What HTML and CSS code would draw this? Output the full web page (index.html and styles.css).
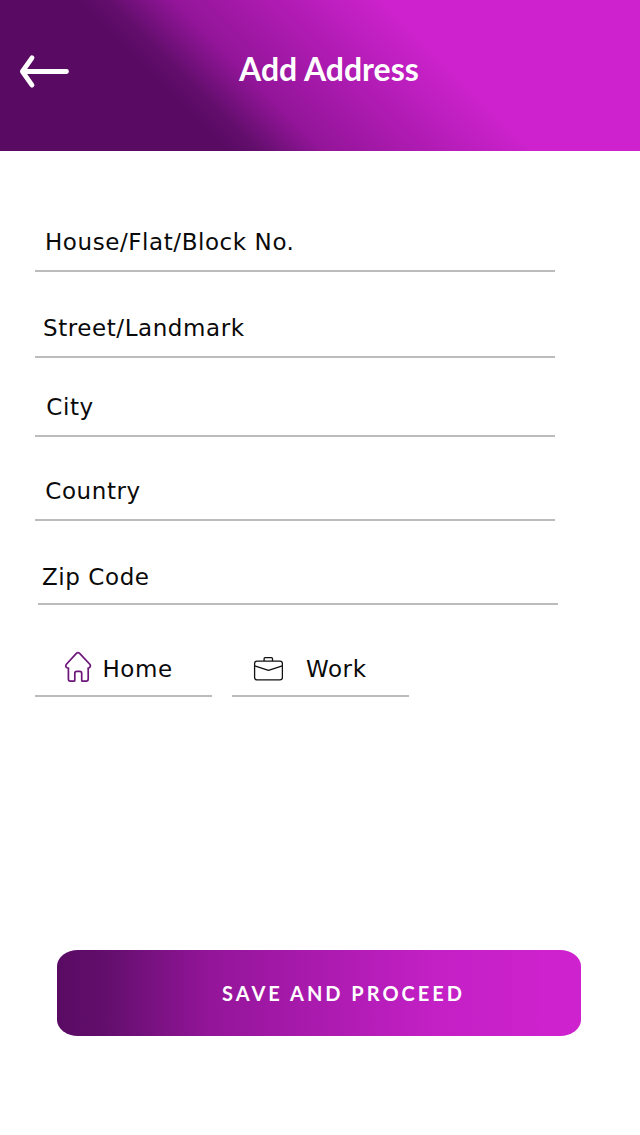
FILE: index.html
```html
<!DOCTYPE html>
<html lang="en">
<head>
<meta charset="utf-8">
<title>Add Address</title>
<link rel="stylesheet" href="styles.css">
</head>
<body>
<header class="header">
  <svg class="back" width="52" height="36" viewBox="0 0 52 36"><path d="M14 3.8 4.4 17.5 14 31.1M4.4 17.5H48.5"/></svg>
  <h1 class="title">Add Address</h1>
</header>
<main class="form">
  <div class="field house">House/Flat/Block No.</div>
  <div class="field street">Street/Landmark</div>
  <div class="field city">City</div>
  <div class="field country">Country</div>
  <div class="field zip">Zip Code</div>
  <div class="types">
    <div class="type home">
      <svg class="icon" width="28" height="32" viewBox="0 0 28 32"><path d="M12.6 2.2Q14 .9 15.4 2.2L25.8 13.2Q27.3 15.4 25.2 16.8L24.2 17.2V28Q24.2 30.2 22.2 30.2H18.6Q17.7 30.2 17.7 29.2V22.4Q17.7 20.4 15.8 20.4H12.8Q10.8 20.4 10.8 22.4V29.2Q10.8 30.2 9.8 30.2H6.4Q4.4 30.2 4.4 28V17.2L3 16.8Q.8 15.4 2.4 13.2Z"/></svg>
      <span>Home</span>
    </div>
    <div class="type work">
      <svg class="icon" width="30" height="26" viewBox="0 0 30 26"><rect x="1.6" y="5.1" width="27.8" height="18.8" rx="2.4"/><path d="M11.1 5V2.7Q11.1 1.7 12.1 1.7H18.5Q19.5 1.7 19.5 2.7V5M1.7 9.9 15.5 14.3 29.3 9.9"/></svg>
      <span>Work</span>
    </div>
  </div>
  <button class="save">SAVE AND PROCEED</button>
</main>
</body>
</html>
```

FILE: styles.css
```css
* { box-sizing: border-box; }
body {
  margin: 0;
  background: #fff;
  font-family: "DejaVu Sans", sans-serif;
  color: #0a0a0a;
}
.header {
  display: grid;
  grid-template-columns: 52px 1fr;
  height: 151px;
  padding: 49px 0 0 18px;
  background: linear-gradient(45deg, #590b63 29%, #620e6c 32.5%, #931599 41%, #cd22cd 67.5%);
}
.back {
  margin-top: 5px;
  fill: none;
  stroke: #fff;
  stroke-width: 4.8;
  stroke-linecap: round;
  stroke-linejoin: round;
}
.title {
  margin: 0;
  padding-left: 169px;
  font: 700 32px/40px Lato, sans-serif;
  color: #fff;
}
.form {
  display: flex;
  flex-direction: column;
  padding: 69px 35px 0;
}
.field {
  width: 520px;
  border-bottom: 2px solid #bcbcbc;
  font-size: 23px;
  line-height: 44px;
  letter-spacing: .575px;
  white-space: nowrap;
}
.house { height: 52px; padding-left: 10px; }
.street { height: 52px; margin-top: 34px; padding-left: 8px; }
.city { height: 52px; margin-top: 27px; padding-left: 11.3px; }
.country { height: 52px; margin-top: 32px; padding-left: 10.3px; }
.zip { height: 50px; margin: 34px 0 0 3px; padding-left: 4px; }
.types {
  display: flex;
  gap: 20px;
  margin-top: 42px;
}
.type {
  display: flex;
  align-items: flex-start;
  width: 177px;
  height: 50px;
  border-bottom: 2px solid #bcbcbc;
  font-size: 23px;
  line-height: 44px;
  letter-spacing: .575px;
}
.icon { flex: none; fill: none; }
.home { padding-left: 29px; }
.home .icon { margin: 4px 10.4px 0 0; stroke: #6c1679; stroke-width: 1.7; }
.work { padding-left: 21px; }
.work .icon { margin: 9px 23px 0 0; stroke: #111; stroke-width: 1.3; stroke-linejoin: round; }
.save {
  width: 524px;
  height: 86px;
  margin: 253px 0 0 22px;
  padding: 0 0 0 165px;
  border: 0;
  border-radius: 21px / 16px;
  background: linear-gradient(90deg, #590b63 0%, #620e6c 9%, #931599 29%, #c320c5 72%, #cd22cd 93%);
  font: 700 20px/24px Lato, sans-serif;
  letter-spacing: 3px;
  text-align: left;
  color: #fff;
}
```
